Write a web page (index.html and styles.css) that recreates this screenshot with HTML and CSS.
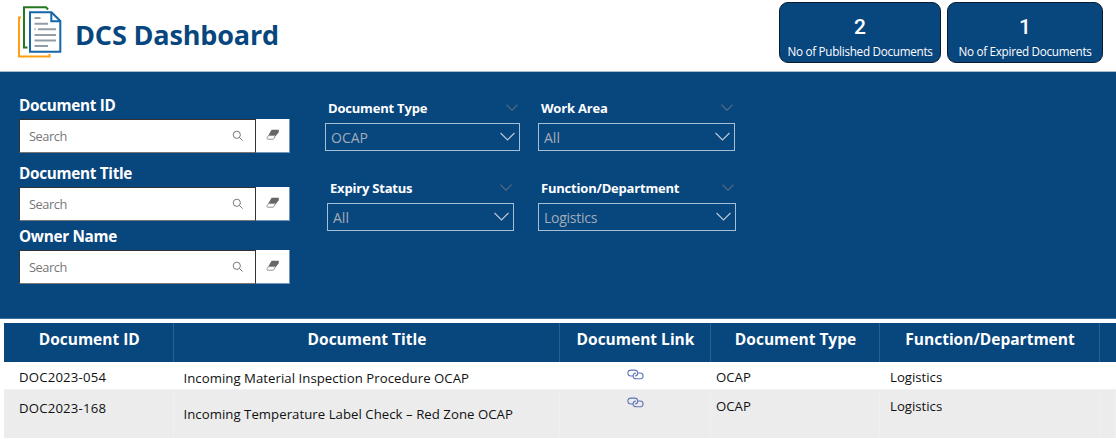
FILE: index.html
```html
<!DOCTYPE html>
<html lang="en">
<head>
<meta charset="utf-8">
<title>DCS Dashboard</title>
<link rel="stylesheet" href="styles.css">
</head>
<body>
<svg class="defs" width="0" height="0" aria-hidden="true">
  <symbol id="search" viewBox="0 0 12 12"><circle cx="4.8" cy="4.8" r="3.6"/><path d="M7.5 7.5L10.6 10.6"/></symbol>
  <symbol id="eraser" viewBox="0 0 14 12"><path class="solid" d="M5.600 .8H12.800V3.200L9.400 7.600L8.800 6.200H2.400Z"/><path d="M2.400 6.600H8.300L9 8L7.300 10.200H1.500Q.7 9.800 1.200 8.600Z"/></symbol>
  <symbol id="chevron" viewBox="0 0 14 8"><path d="M.5 .7L7 7.2L13.5 .7"/></symbol>
  <symbol id="link" viewBox="0 0 17 12"><path d="M6.1 7H4C2 7 .9 5.7 .9 4S2.200 1.100 4.300 1.100H7.300C9.400 1.100 10.700 2.400 10.700 4C10.700 5.700 9.500 7 8 7"/><path d="M10.900 4H13C15 4 16.100 5.300 16.100 6.900S14.800 9.800 12.700 9.800H9.500C7.400 9.800 6.100 8.600 6.100 7C6.100 5.300 7.200 4.100 9 4"/></symbol>
</svg>
<header class="top">
  <svg class="logo" viewBox="0 0 46 54" width="46" height="54">
    <path d="M4 13.500H2V52.500H32.500V50" stroke="#ffa013"/>
    <path d="M10.500 43.500H7V3.200H29L31 5.500" stroke="#24781f"/>
    <path class="page" d="M13 8.200H34.500L43.300 17V47.800H13Z" stroke="#1766a8"/>
    <path d="M34.300 8.500V17.200H43" stroke="#1766a8"/>
    <path d="M17.500 14H23.500M17.500 19.800H31M17.500 25.300H18.500M21 25.300H39M17.500 31H39M17.500 36.500H39M17.500 42H31" stroke="#929da6"/>
  </svg>
  <h1 class="title">DCS Dashboard</h1>
  <div class="card card-pub"><span class="num">2</span><span class="cap">No of Published Documents</span></div>
  <div class="card card-exp"><span class="num">1</span><span class="cap">No of Expired Documents</span></div>
</header>
<section class="filters">
  <div class="searches">
    <div class="field"><label class="flabel">Document ID</label><div class="row"><div class="input"><span>Search</span><svg class="isearch"><use href="#search"/></svg></div><div class="clear"><svg class="ieraser"><use href="#eraser"/></svg></div></div></div>
    <div class="field f-title"><label class="flabel">Document Title</label><div class="row"><div class="input"><span>Search</span><svg class="isearch"><use href="#search"/></svg></div><div class="clear"><svg class="ieraser"><use href="#eraser"/></svg></div></div></div>
    <div class="field f-owner"><label class="flabel">Owner Name</label><div class="row"><div class="input"><span>Search</span><svg class="isearch"><use href="#search"/></svg></div><div class="clear"><svg class="ieraser"><use href="#eraser"/></svg></div></div></div>
  </div>
  <div class="slicers">
    <div class="slicer s-type"><div class="shead"><span>Document Type</span><svg class="mini"><use href="#chevron"/></svg></div><div class="select"><span>OCAP</span><svg class="chev"><use href="#chevron"/></svg></div></div>
    <div class="slicer s-area"><div class="shead"><span>Work Area</span><svg class="mini"><use href="#chevron"/></svg></div><div class="select"><span>All</span><svg class="chev"><use href="#chevron"/></svg></div></div>
    <div class="slicer s-status"><div class="shead"><span>Expiry Status</span><svg class="mini"><use href="#chevron"/></svg></div><div class="select"><span>All</span><svg class="chev"><use href="#chevron"/></svg></div></div>
    <div class="slicer s-func"><div class="shead"><span>Function/Department</span><svg class="mini"><use href="#chevron"/></svg></div><div class="select"><span class="v-log">Logistics</span><svg class="chev"><use href="#chevron"/></svg></div></div>
  </div>
</section>
<main class="grid">
  <div class="tr head"><div>Document ID</div><div>Document Title</div><div>Document Link</div><div>Document Type</div><div>Function/Department</div><div></div></div>
  <div class="tr body first"><div class="c-id"><span>DOC2023-054</span></div><div class="c-title"><span>Incoming Material Inspection Procedure OCAP</span></div><div class="c-link"><svg class="ilink"><use href="#link"/></svg></div><div class="c-type"><span>OCAP</span></div><div class="c-func"><span>Logistics</span></div><div></div></div>
  <div class="tr body second"><div class="c-id"><span>DOC2023-168</span></div><div class="c-title"><span>Incoming Temperature Label Check – Red Zone OCAP</span></div><div class="c-link"><svg class="ilink"><use href="#link"/></svg></div><div class="c-type"><span>OCAP</span></div><div class="c-func"><span>Logistics</span></div><div></div></div>
</main>
</body>
</html>
```
FILE: styles.css
```css
* { box-sizing: border-box; }
body { margin: 0; width: 1116px; height: 439px; overflow: hidden; background: #fff; font-family: "Open Sans", "Noto Sans", sans-serif; }
svg { fill: none; flex: none; display: block; }
span, label, h1 { white-space: nowrap; }
.defs { position: absolute; }
.top { display: flex; height: 72px; padding: 2px 13px 0 17px; border-bottom: 1px solid #a9bccd; }
.logo { margin-top: 2px; stroke-width: 2; }
.page { fill: #fff; }
.title { margin: 14px 0 0 12px; font-size: 27px; line-height: 38px; height: 38px; font-weight: 700; color: #08467e; letter-spacing: -0.15px; }
.card { display: flex; flex-direction: column; align-items: center; height: 61px; border: 1px solid #0b1c30; border-radius: 9px; background: #08467e; color: #fff; padding-top: 11px; }
.card-pub { margin-left: auto; width: 162px; }
.card-exp { margin-left: 6px; width: 156px; }
.num { font: 500 21px/27px Roboto, sans-serif; }
.cap { font-size: 11.700px; line-height: 16px; margin-top: 2px; letter-spacing: -0.28px; }
.filters { display: flex; height: 247px; background: #08467e; border-bottom: 1px solid #3c6f9f; padding: 22px 0 0 19px; }
.searches { width: 271px; }
.field { display: flex; flex-direction: column; }
.f-title { margin-top: 5px; }
.f-owner { margin-top: 8px; }
.flabel { color: #fff; font-size: 15.300px; font-weight: 700; line-height: 22px; height: 25px; letter-spacing: -0.3px; }
.f-title .flabel { height: 29px; padding-top: 4px; }
.f-owner .flabel { height: 21px; line-height: 14px; }
.row { display: flex; height: 34px; }
.input { display: flex; align-items: center; width: 237px; background: #fff; border: 1px solid #333; border-bottom-color: #777; padding: 0 11px 0 9px; color: #777; font-size: 12.800px; letter-spacing: -0.45px; }
.isearch { width: 12px; height: 12px; margin-left: auto; stroke: #777; stroke-width: 1; }
.clear { width: 34px; background: #fff; border-right: 1px solid #7096b9; border-bottom: 1px solid #7096b9; }
.ieraser { width: 14px; height: 12px; margin: 10px 0 0 10px; stroke: #777; stroke-width: .8; }
.solid { fill: #666; stroke: none; }
.slicers { display: grid; grid-template-columns: 213px 197px; grid-template-rows: 80px 60px; margin-left: 35px; padding-top: 5px; }
.shead { display: flex; height: 24px; padding-left: 3px; color: #fff; font-size: 13px; font-weight: 700; line-height: 19px; letter-spacing: -0.2px; }
.mini { width: 12px; height: 7px; margin: 5px 2px 0 auto; stroke: #526c84; stroke-width: 1.4; }
.select { display: flex; align-items: center; height: 28px; border: 1px solid #a5bfd6; padding: 1px 4px 0 5px; color: #a2adb7; font-size: 14px; }
.v-log { letter-spacing: -0.25px; }
.chev { width: 15px; height: 9px; margin: -2px 0 0 auto; stroke: #bac8d5; stroke-width: 1.1; }
.s-type { width: 195px; }
.s-area { width: 197px; }
.s-status { width: 187px; margin-left: 2px; }
.s-func { width: 198px; }
.grid { margin: 4px 0 0 4px; }
.tr { display: grid; grid-template-columns: 169.500px 386px 151px 169px 220px 1fr; }
.head { height: 39px; background: #08467e; color: #fff; font-weight: 700; font-size: 15.500px; line-height: 32px; text-align: center; }
.head > div { border-right: 1px solid #2c608f; padding-left: 2px; }
.head > div:last-child { border: 0; }
.body { font-size: 13.200px; color: #111; }
.first { height: 28px; border-bottom: 1px solid #f1f2f5; }
.second { height: 48px; background: #ececec; }
.second > div { border-right: 1px solid #f0f0f1; }
.c-id { padding: 6px 0 0 15px; line-height: 18px; letter-spacing: .18px; }
.c-title { padding: 7px 0 0 10px; line-height: 18px; letter-spacing: .04px; }
.c-type { padding: 6px 0 0 5.500px; line-height: 18px; }
.c-func { padding: 6px 0 0 10.500px; line-height: 18px; }
.ilink { width: 17px; height: 12px; margin: 7px 0 0 67px; stroke: #6175b8; stroke-width: 1.1; }
.second .c-title { padding-top: 15px; }
.second .c-id { padding-top: 9px; }
.second .c-type, .second .c-func { padding-top: 7px; }
```
